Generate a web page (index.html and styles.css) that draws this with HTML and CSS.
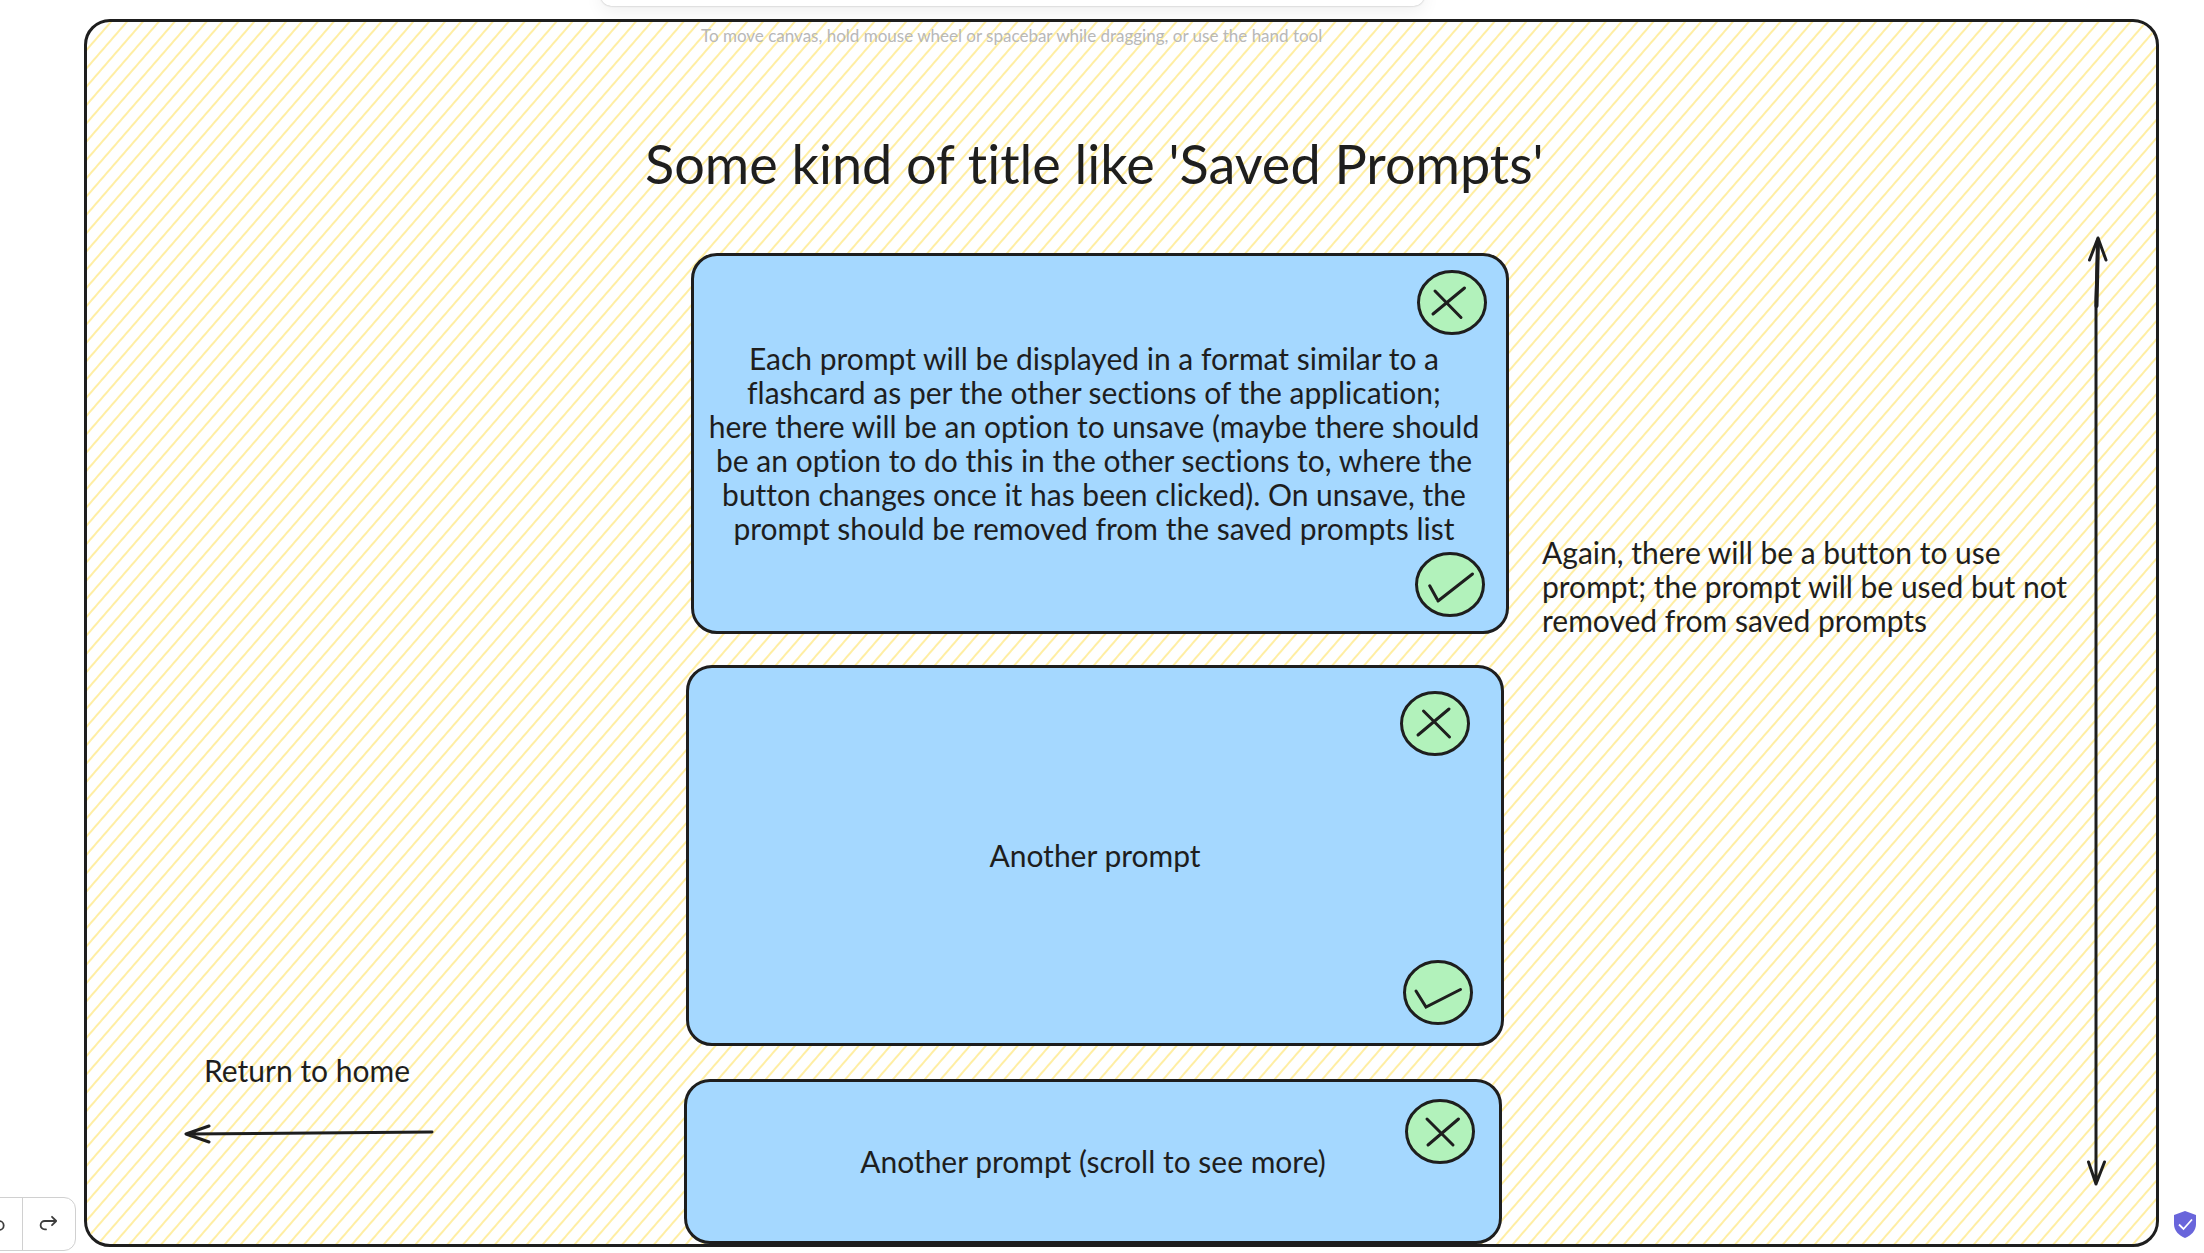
FILE: index.html
```html
<!DOCTYPE html>
<html lang="en">
<head>
<meta charset="utf-8">
<meta name="viewport" content="width=device-width, initial-scale=1">
<title>Saved Prompts wireframe</title>
<link rel="stylesheet" href="styles.css">
</head>
<body>
<main class="canvas">
  <section class="frame">
    <svg class="hatch" aria-hidden="true">
      <defs>
        <pattern id="hachure" width="12" height="12" patternUnits="userSpaceOnUse" patternTransform="rotate(-49)">
          <path d="M0 6H12" stroke="#ffec99" stroke-width="1.800"/>
        </pattern>
      </defs>
      <rect width="100%" height="100%" fill="url(#hachure)"/>
    </svg>
  </section>

  <h1 class="title">Some kind of title like 'Saved Prompts'</h1>

  <article class="card card-first">
    <p class="text">Each prompt will be displayed in a format similar to a<br>flashcard as per the other sections of the application;<br>here there will be an option to unsave (maybe there should<br>be an option to do this in the other sections to, where the<br>button changes once it has been clicked). On unsave, the<br>prompt should be removed from the saved prompts list</p>
    <button class="mark first-unsave" type="button" aria-label="Unsave prompt">
      <svg viewBox="0 0 70 65"><ellipse cx="35" cy="32.500" rx="33.500" ry="31"/><path d="M18 21L44 47.500M47.500 18L16 44"/></svg>
    </button>
    <button class="mark first-use" type="button" aria-label="Use prompt">
      <svg viewBox="0 0 70 65"><ellipse cx="35" cy="32.500" rx="33.500" ry="31"/><path d="M14.700 33.700L22 47M23 49L57.500 22"/></svg>
    </button>
  </article>

  <article class="card card-second">
    <p class="text">Another prompt</p>
    <button class="mark second-unsave" type="button" aria-label="Unsave prompt">
      <svg viewBox="0 0 70 65"><ellipse cx="35" cy="32.500" rx="33.500" ry="31"/><path d="M23.500 20L49.500 46M49 18L18 44"/></svg>
    </button>
    <button class="mark second-use" type="button" aria-label="Use prompt">
      <svg viewBox="0 0 70 65"><ellipse cx="35" cy="32.500" rx="33.500" ry="31"/><path d="M13 31L23 47L57.500 29.500"/></svg>
    </button>
  </article>

  <article class="card card-third">
    <p class="text">Another prompt (scroll to see more)</p>
    <button class="mark third-unsave" type="button" aria-label="Unsave prompt">
      <svg viewBox="0 0 70 65"><ellipse cx="35" cy="32.500" rx="33.500" ry="31"/><path d="M22 20L48 46M53.500 20L23 46"/></svg>
    </button>
  </article>

  <p class="text note">Again, there will be a button to use<br>prompt; the prompt will be used but not<br>removed from saved prompts</p>

  <svg class="stroke scroll-arrow" viewBox="0 0 22 954" aria-hidden="true">
    <path d="M12 4L10 65V950M3.500 26L12 4L20 26M2.500 928L10 950L18.500 928"/>
    <path d="M12 6L10.500 72" stroke-width="4"/>
  </svg>

  <p class="text home-label">Return to home</p>
  <svg class="stroke home-arrow" viewBox="0 0 252 22" aria-hidden="true">
    <path d="M249 9L3 11M26 3L3 11L26 19"/>
  </svg>
</main>

<div class="toolbar"></div>
<p class="hint">To move canvas, hold mouse wheel or spacebar while dragging, or use the hand tool</p>

<div class="history">
  <button class="step" type="button" aria-label="Undo">
    <svg viewBox="0 0 20 20"><path d="M8 11L4 7.500L8 4M4 7.500H13.500A3.500 3.500 0 0 1 13.500 15H12.500"/></svg>
  </button>
  <button class="step" type="button" aria-label="Redo">
    <svg viewBox="0 0 20 20"><path d="M12.500 11L16 7.500L12.500 4M16 7.500H6.500A3.500 3.500 0 0 0 6.500 14.500H7.500"/></svg>
  </button>
</div>

<a class="shield" href="#encryption" aria-label="End-to-end encryption">
  <svg viewBox="0 0 22 27"><path d="M11 0L22 4V13C22 20 17 24.500 11 27C5 24.500 0 20 0 13V4Z" fill="#6965db"/><path d="M5 13.500L9.500 18L18 8.500" fill="none" stroke="#fff" stroke-width="1.800"/></svg>
</a>
</body>
</html>
```
FILE: styles.css
```css
* {
  box-sizing: border-box;
}

body {
  margin: 0;
  background: #fff;
  color: #1e1e1e;
  font-family: Lato, "Liberation Sans", sans-serif;
  font-variant-ligatures: none;
}

button {
  padding: 0;
  border: 0;
  background: none;
  cursor: pointer;
}

/* Whiteboard: every item is placed freely on it */
.canvas {
  position: relative;
  min-height: 100vh;
  overflow: hidden;
}

.frame {
  position: absolute;
  inset: 19px 45px 6px 84px;
  overflow: hidden;
  border: 3px solid #1e1e1e;
  border-radius: 26px;
}

.hatch {
  display: block;
  width: 100%;
  height: 100%;
}

.title {
  position: absolute;
  top: 134px;
  left: 645px;
  margin: 0;
  font-size: 54px;
  font-weight: 400;
  line-height: 60px;
  white-space: nowrap;
}

.text {
  margin: 0;
  font-size: 30px;
  line-height: 34px;
  white-space: nowrap;
}

.card {
  position: absolute;
  display: flex;
  align-items: center;
  justify-content: center;
  width: 818px;
  height: 381px;
  padding-bottom: 2px;
  border: 3px solid #1e1e1e;
  border-radius: 26px;
  background: #a5d8ff;
  text-align: center;
}

.card-first {
  top: 253px;
  left: 691px;
  padding-right: 12px;
}

.card-second {
  top: 665px;
  left: 686px;
}

.card-third {
  top: 1079px;
  left: 684px;
  height: 165px;
}

.mark {
  position: absolute;
  width: 70px;
  height: 65px;
}

.mark svg {
  display: block;
  fill: #b2f2bb;
  stroke: #1e1e1e;
  stroke-width: 3;
  stroke-linecap: round;
}

.mark path {
  fill: none;
}

.first-unsave {
  top: 14px;
  right: 19px;
}

.first-use {
  right: 21px;
  bottom: 14px;
}

.second-unsave {
  top: 23px;
  right: 31px;
}

.second-use {
  right: 28px;
  bottom: 18px;
}

.third-unsave {
  top: 17px;
  right: 24px;
}

.note {
  position: absolute;
  top: 535px;
  left: 1542px;
}

.stroke {
  position: absolute;
  fill: none;
  stroke: #1e1e1e;
  stroke-width: 3;
  stroke-linecap: round;
  stroke-linejoin: round;
}

.scroll-arrow {
  top: 234px;
  left: 2086px;
  width: 22px;
  height: 954px;
}

.home-label {
  position: absolute;
  top: 1053px;
  left: 204px;
}

.home-arrow {
  top: 1123px;
  left: 183px;
  width: 252px;
  height: 22px;
}

/* Editor controls floating over the whiteboard */
.toolbar {
  position: absolute;
  top: -40px;
  left: 601px;
  width: 823px;
  height: 46px;
  border-radius: 10px;
  background: #fff;
  box-shadow: 0 0 2px rgba(0, 0, 0, 0.3), 0 7px 18px rgba(0, 0, 0, 0.06);
}

.hint {
  position: absolute;
  top: 25px;
  left: 701px;
  margin: 0;
  color: #b8b8b8;
  font-size: 17px;
  line-height: 22px;
  white-space: nowrap;
}

.history {
  position: absolute;
  bottom: 2px;
  left: -32px;
  display: flex;
  width: 108px;
  height: 54px;
  overflow: hidden;
  border: 1px solid #d0d0d0;
  border-radius: 12px;
  background: #fff;
}

.step {
  display: grid;
  flex: 1;
  place-items: center;
}

.step + .step {
  border-left: 1px solid #d0d0d0;
}

.step svg {
  width: 24px;
  height: 24px;
  fill: none;
  stroke: #3d3d3d;
  stroke-width: 1.5;
  stroke-linecap: round;
  stroke-linejoin: round;
}

.shield {
  position: absolute;
  right: 8px;
  bottom: 15px;
  width: 22px;
  height: 27px;
}

.shield svg {
  display: block;
}
```
